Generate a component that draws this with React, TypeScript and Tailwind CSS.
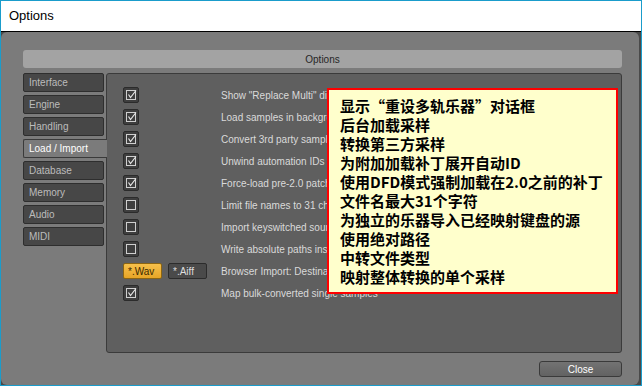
import React from 'react';

interface OptionRow {
  label: string;
  checked?: boolean;
  kind?: 'check' | 'format';
}

const rows: OptionRow[] = [
  { label: 'Show "Replace Multi" dialog', checked: true },
  { label: 'Load samples in background', checked: true },
  { label: 'Convert 3rd party samples', checked: true },
  { label: 'Unwind automation IDs for bank patches', checked: true },
  { label: 'Force-load pre-2.0 patches in DFD mode', checked: true },
  { label: 'Limit file names to 31 characters', checked: false },
  { label: 'Import keyswitched sources into separate instruments', checked: false },
  { label: 'Write absolute paths instead of relative', checked: false },
  { label: 'Browser Import: Destination file type', kind: 'format' },
  { label: 'Map bulk-converted single samples', checked: true },
];

const tabs = ['Interface', 'Engine', 'Handling', 'Load / Import', 'Database', 'Memory', 'Audio', 'MIDI'];

const tipLines = [
  '显示“重设多轨乐器”对话框',
  '后台加载采样',
  '转换第三方采样',
  '为附加加载补丁展开自动ID',
  '使用DFD模式强制加载在2.0之前的补丁',
  '文件名最大31个字符',
  '为独立的乐器导入已经映射键盘的源',
  '使用绝对路径',
  '中转文件类型',
  '映射整体转换的单个采样',
];

const Checkbox: React.FC<{ checked?: boolean }> = ({ checked }) => (
  <div className="w-4 h-4 rounded-[2px] bg-[#3e3e3e] border border-[#2b2b2b] flex items-center justify-center">
    <svg width="14" height="14" viewBox="0 0 14 14">
      <rect x="2.5" y="2.5" width="9" height="9" fill="none" stroke="#cfcfcf" strokeWidth="1" />
      {checked && <path d="M4.5 6.5 L6.5 9.5 L12 2.5" fill="none" stroke="#e6e6e6" strokeWidth="1.2" />}
    </svg>
  </div>
);

export default function App() {
  return (
    <div className="relative w-[642px] h-[386px] border border-[#1a9ccb] flex flex-col overflow-hidden font-['Liberation_Sans',sans-serif]">
      <div className="h-[30px] bg-white flex items-center px-2 text-[13px] text-black">Options</div>
      <div className="flex-1 bg-[#4a4a4a] border-t border-black flex">
        <div className="flex-1 mr-[2px] bg-[#7b7b7b] rounded-[6px] flex flex-col pt-[18px] pl-[22px] pr-[17px]">
          <div className="h-[18px] rounded-[3px] bg-[#a3a3a3] flex items-center justify-center text-[10px] text-[#262626]">
            Options
          </div>
          <div className="flex mt-[5px] h-[280px]">
            <div className="w-[83px] flex flex-col gap-[3px] relative z-10">
              {tabs.map((t) =>
                t === 'Load / Import' ? (
                  <div
                    key={t}
                    className="w-[84px] h-[19px] bg-[#7b7b7b] border-t border-l border-b border-[#3a3a3a] rounded-l-[2px] flex items-center pl-[5px] text-[10px] text-white"
                  >
                    {t}
                  </div>
                ) : (
                  <div
                    key={t}
                    className="w-[81px] h-[19px] bg-[#474747] border border-[#2e2e2e] rounded-[2px] flex items-center pl-[5px] text-[10px] text-[#bcbcbc]"
                  >
                    {t}
                  </div>
                )
              )}
            </div>
            <div className="flex-1 bg-[#5f5f5f] border border-[#3b3b3b] rounded-[3px] overflow-hidden pt-[10px] pl-4">
              {rows.map((r) => (
                <div key={r.label} className="h-[22px] flex items-center">
                  <div className="w-[98px] flex items-center gap-[6px]">
                    {r.kind === 'format' ? (
                      <>
                        <div className="w-[39px] h-4 rounded-[2px] bg-gradient-to-b from-[#f6c04a] to-[#e7a526] border border-[#8c6512] flex items-center pl-[4px] text-[10px] text-[#3a2800]">
                          *.Wav
                        </div>
                        <div className="w-[39px] h-4 rounded-[2px] bg-[#4a4a4a] border border-[#2c2c2c] flex items-center pl-[4px] text-[10px] text-[#dedede]">
                          *.Aiff
                        </div>
                      </>
                    ) : (
                      <Checkbox checked={r.checked} />
                    )}
                  </div>
                  <span className="text-[10px] text-[#dadada] whitespace-nowrap">{r.label}</span>
                </div>
              ))}
            </div>
          </div>
          <div className="flex justify-end mt-2">
            <div className="w-[83px] h-4 rounded-[3px] bg-gradient-to-b from-[#737373] to-[#626262] border border-[#3a3a3a] flex items-center justify-center text-[10px] text-white">
              Close
            </div>
          </div>
        </div>
      </div>
      {/* tooltip lying over the option labels */}
      <div className="absolute left-[326px] top-[87px] w-[291px] h-[206px] border-2 border-[#ff0000] bg-[#ffffcc] pl-[11px] pt-[6px] font-['Noto_Sans_CJK_SC',sans-serif] font-bold text-[15px] leading-[19px] text-black">
        {tipLines.map((l) => (
          <div key={l} className="whitespace-nowrap">{l}</div>
        ))}
      </div>
    </div>
  );
}
